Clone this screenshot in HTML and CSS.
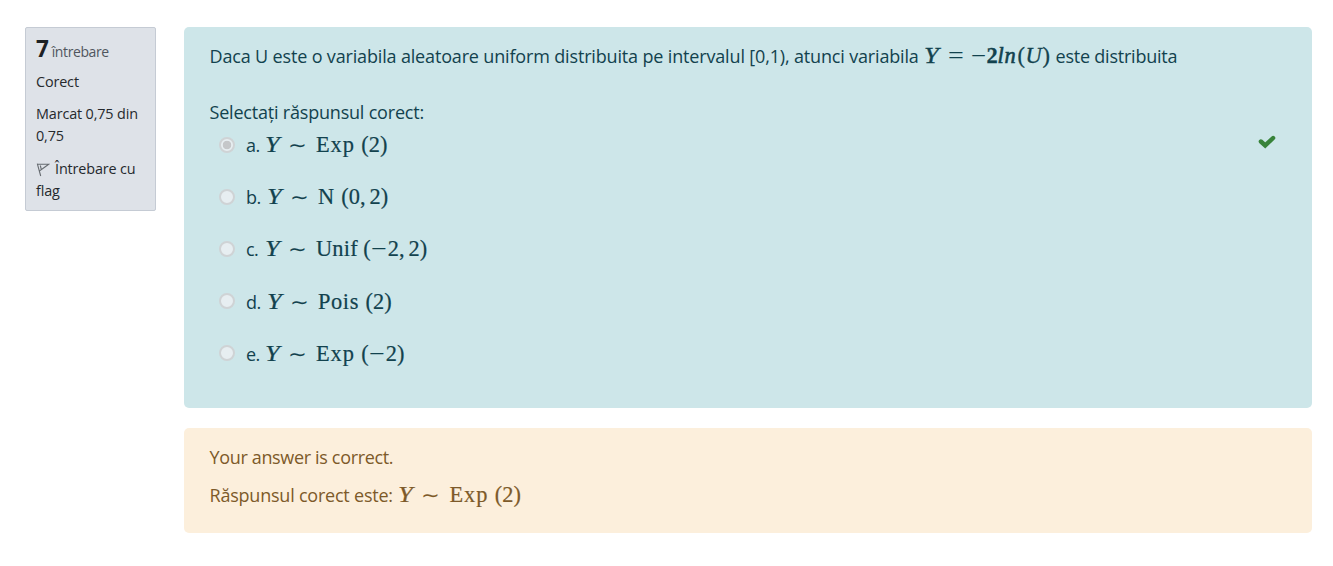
FILE: index.html
```html
<!DOCTYPE html>
<html lang="ro">
<head>
<meta charset="utf-8">
<title>Întrebare 7</title>
<link rel="stylesheet" href="styles.css">
</head>
<body>
<main class="question">
  <aside class="info">
    <h3 class="number"><strong>7</strong> <span class="label">întrebare</span></h3>
    <div class="state">Corect</div>
    <div class="grade">Marcat 0,75 din<br>0,75</div>
    <div class="flag"><svg class="flag-icon" viewBox="0 0 14 15"><path d="M1.3 1.6 4.7 14M1.5 2.3 12.8 2.2 8.6 5.3 3.6 8.9M4.3 3.5 5.3 7.4" /></svg><span class="flag-text">Întrebare cu</span><br>flag</div>
  </aside>
  <div class="content">
    <section class="formulation">
      <p class="text"><span class="lead">Daca U este o variabila aleatoare uniform distribuita pe intervalul [0,1), atunci variabila</span><span class="math wide"><i class="y">Y</i><span class="eq">=</span><span class="minus">−</span><b class="two">2</b><i class="ln">ln</i><span class="open">(</span><i class="u">U</i><span class="close">)</span></span><span class="tail">este distribuita</span></p>
      <p class="prompt">Selectați răspunsul corect:</p>
      <div class="answers">
        <div class="row"><span class="radio checked"></span><span class="letter a">a.</span><span class="math"><i class="y">Y</i><span class="sim">∼</span><span class="name exp">Exp</span><span class="arg">(2)</span></span>
          <svg class="check" viewBox="0 0 18 14"><path d="M2.9 6.5 7.2 10.4 15.1 3" /></svg></div>
        <div class="row"><span class="radio"></span><span class="letter b">b.</span><span class="math"><i class="y">Y</i><span class="sim">∼</span><span class="name n">N</span><span class="arg">(0,<span class="thin"></span>2)</span></span></div>
        <div class="row"><span class="radio"></span><span class="letter c">c.</span><span class="math"><i class="y">Y</i><span class="sim">∼</span><span class="name unif">Unif</span><span class="arg">(<span class="neg">−</span>2,<span class="thin"></span>2)</span></span></div>
        <div class="row"><span class="radio"></span><span class="letter b">d.</span><span class="math"><i class="y">Y</i><span class="sim">∼</span><span class="name pois">Pois</span><span class="arg">(2)</span></span></div>
        <div class="row"><span class="radio"></span><span class="letter a">e.</span><span class="math"><i class="y">Y</i><span class="sim">∼</span><span class="name exp">Exp</span><span class="arg">(<span class="neg">−</span>2)</span></span></div>
      </div>
    </section>
    <section class="outcome">
      <p class="feedback">Your answer is correct.</p>
      <p class="right"><span class="right-label">Răspunsul corect este:</span><span class="math"><i class="y">Y</i><span class="sim">∼</span><span class="name exp">Exp</span><span class="arg">(2)</span></span></p>
    </section>
  </div>
</main>
</body>
</html>
```
FILE: styles.css
```css
* { box-sizing: border-box; }
body { margin: 0; background: #fff; font-family: "Open Sans", "Noto Sans", sans-serif; }
p, h3 { margin: 0; }
.question { display: flex; align-items: flex-start; gap: 28px; padding: 27px 21px 0 25px; }
.info { width: 131px; height: 184px; padding: 9px 0 0 10px; border: 1px solid #c5cbd4; border-radius: 2px; background: #dee2e8; color: #25292d; font-size: 14.4px; line-height: 22px; letter-spacing: -.14px; white-space: nowrap; }
.number { height: 34px; font-size: 14px; line-height: 24px; font-weight: 400; letter-spacing: -.4px; color: #50565e; }
.number strong { font-size: 22.5px; font-weight: 700; color: #1d2125; }
.state { height: 32px; line-height: 22px; }
.grade { height: 55px; }
.flag-icon { width: 14px; height: 15px; margin-right: 5px; vertical-align: -3px; fill: none; stroke: #666b70; stroke-width: 1.1; }
.content { flex: 1; display: flex; flex-direction: column; gap: 20px; font-size: 18px; line-height: 28px; white-space: nowrap; }
.formulation { height: 381px; padding: 15px 25px 0 26px; border-radius: 5px; background: #cde6e9; color: #12424e; }
.text { display: flex; align-items: baseline; height: 56px; }
.lead { width: 714px; letter-spacing: -.16px; margin-left: -.5px; }
.tail { letter-spacing: -.22px; }
.prompt { height: 33px; letter-spacing: -.2px; margin-left: -.5px; }
.row { display: flex; align-items: baseline; height: 52.2px; padding-left: 9px; }
.radio { width: 16px; height: 16px; margin-right: 11px; border: 2px solid #cfd3d5; border-radius: 50%; background: #e7eef1; align-self: flex-start; margin-top: 5.5px; }
.checked { background: radial-gradient(circle, #c5c7c9 0 4px, #e7eef1 4.6px); }
.letter { width: 18.5px; letter-spacing: -.5px; }
.letter.b { width: 20.5px; }
.check { width: 18px; height: 14px; margin-left: auto; margin-right: 11px; align-self: flex-start; margin-top: 4px; fill: none; stroke: #38833a; stroke-width: 4.4; stroke-linejoin: miter; stroke-linecap: round; }
.math { display: inline-flex; align-items: baseline; font-family: "Liberation Serif", serif; font-size: 22.4px; line-height: 28px; -webkit-text-stroke: .2px; }
.y { width: 23px; transform: scaleX(1.18); transform-origin: left; }
.sim { width: 28.5px; font-size: 22.4px; font-family: "DejaVu Sans", sans-serif; font-size: 20px; transform: scaleX(1.12); transform-origin: left; -webkit-text-stroke: 0; }
.name { letter-spacing: .6px; margin-right: 6.5px; }
.exp { letter-spacing: .9px; }
.unif { letter-spacing: .2px; margin-right: 5.5px; }
.thin { display: inline-block; width: 4px; }
.neg { display: inline-block; width: 17px; transform: scaleX(1.25); transform-origin: left; -webkit-text-stroke: 0; }
.wide { width: 132px; -webkit-text-stroke: .3px; }
.wide .y { width: 24px; }
.eq { width: 23px; transform: scaleX(1.25); transform-origin: left; -webkit-text-stroke: 0; }
.minus { width: 16px; transform: scaleX(1.2); transform-origin: left; -webkit-text-stroke: 0; }
.two { width: 11px; }
.ln { width: 20px; letter-spacing: .8px; -webkit-text-stroke: .6px; }
.open { width: 8px; }
.u { width: 17px; }
.outcome { height: 105px; padding: 15px 26px; border-radius: 5px; background: #fcefdc; color: #7d5a29; }
.feedback { height: 38px; letter-spacing: -.34px; margin-left: -.5px; }
.right { display: flex; align-items: baseline; }
.right-label { width: 188.5px; letter-spacing: -.22px; margin-left: -.5px; }
```
